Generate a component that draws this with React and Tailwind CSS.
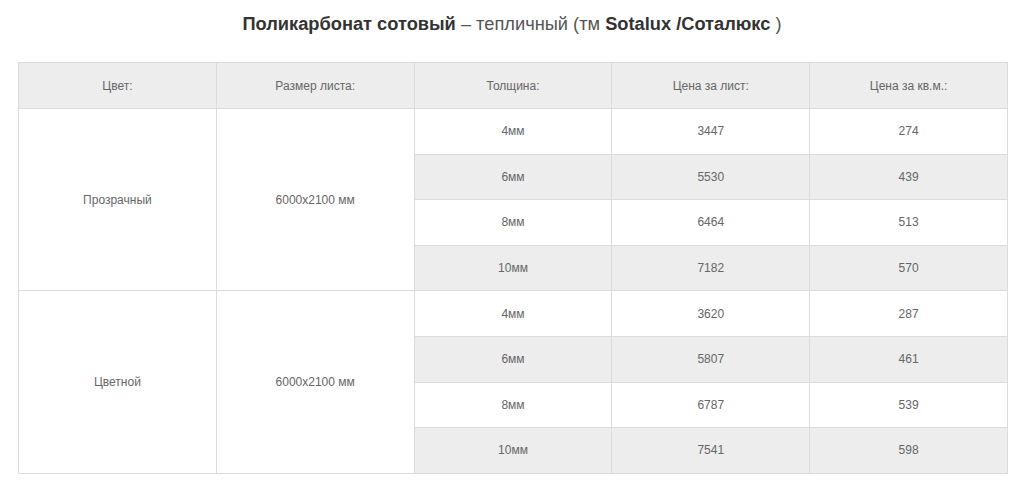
const groups = [
  {
    color: "Прозрачный",
    size: "6000x2100 мм",
    rows: [
      ["4мм", "3447", "274"],
      ["6мм", "5530", "439"],
      ["8мм", "6464", "513"],
      ["10мм", "7182", "570"],
    ],
  },
  {
    color: "Цветной",
    size: "6000x2100 мм",
    rows: [
      ["4мм", "3620", "287"],
      ["6мм", "5807", "461"],
      ["8мм", "6787", "539"],
      ["10мм", "7541", "598"],
    ],
  },
];

const headers = ["Цвет:", "Размер листа:", "Толщина:", "Цена за лист:", "Цена за кв.м.:"];

export default function App() {
  return (
    <div
      className="bg-white min-h-screen pt-[11px] px-[18px]"
      style={{ fontFamily: '"Liberation Sans", Arial, sans-serif' }}
    >
      <h2 className="text-center text-[18.25px] leading-[26px] text-[#333] mb-[25px]">
        <b>Поликарбонат сотовый</b>
        <span className="text-[#555]"> – тепличный (тм </span>
        <b>Sotalux /Соталюкс</b>
        <span className="text-[#555]"> )</span>
      </h2>

      <table className="w-[990px] table-fixed border-collapse border border-[#dcdcdc] text-[12px] text-[#666]">
        <thead>
          <tr className="bg-[#ededed]">
            {headers.map((h) => (
              <th key={h} className="h-[46px] border border-[#dcdcdc] font-normal text-center">
                {h}
              </th>
            ))}
          </tr>
        </thead>
        <tbody>
          {groups.map((g) =>
            g.rows.map((r, i) => (
              <tr key={g.color + i}>
                {i === 0 && (
                  <>
                    <td rowSpan={4} className="border border-[#dcdcdc] text-center bg-white">
                      {g.color}
                    </td>
                    <td rowSpan={4} className="border border-[#dcdcdc] text-center bg-white">
                      {g.size}
                    </td>
                  </>
                )}
                {r.map((c, j) => (
                  <td
                    key={j}
                    className={`h-[45.6px] border border-[#dcdcdc] text-center ${
                      i % 2 === 1 ? "bg-[#ededed]" : "bg-white"
                    }`}
                  >
                    {c}
                  </td>
                ))}
              </tr>
            ))
          )}
        </tbody>
      </table>
    </div>
  );
}
